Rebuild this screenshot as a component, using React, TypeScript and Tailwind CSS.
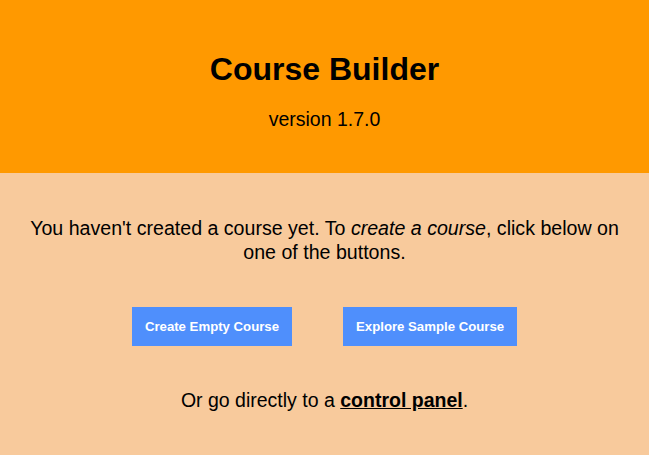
import React from "react";

function ActionButton({ label }: { label: string }) {
  return (
    <button
      type="button"
      className="h-[39px] px-[13px] bg-[#4f8ffc] text-white text-[13.2px] font-bold leading-none"
    >
      {label}
    </button>
  );
}

export default function App() {
  return (
    <div className="min-h-screen bg-[#f8ca9c] text-black font-['Liberation_Sans',Arial,sans-serif]">
      {/* Header */}
      <header className="h-[173px] bg-[#ff9900] flex flex-col items-center pt-[51px]">
        <h1 className="text-[32px] leading-[36px] font-bold">Course Builder</h1>
        <p className="mt-[20px] text-[19.5px] leading-[24px]">version 1.7.0</p>
      </header>

      {/* Empty state */}
      <main className="flex flex-col items-center px-[20px] pt-[43px] text-center">
        <p className="text-[19.6px] leading-[24px] max-w-[600px]">
          You haven't created a course yet. To <em>create a course</em>, click below on one of the
          buttons.
        </p>

        <div className="mt-[43px] flex gap-[51px]">
          <ActionButton label="Create Empty Course" />
          <ActionButton label="Explore Sample Course" />
        </div>

        <p className="mt-[42px] text-[19.5px] leading-[24px]">
          Or go directly to a{" "}
          <a href="#" className="font-bold underline">
            control panel
          </a>
          .
        </p>
      </main>
    </div>
  );
}
